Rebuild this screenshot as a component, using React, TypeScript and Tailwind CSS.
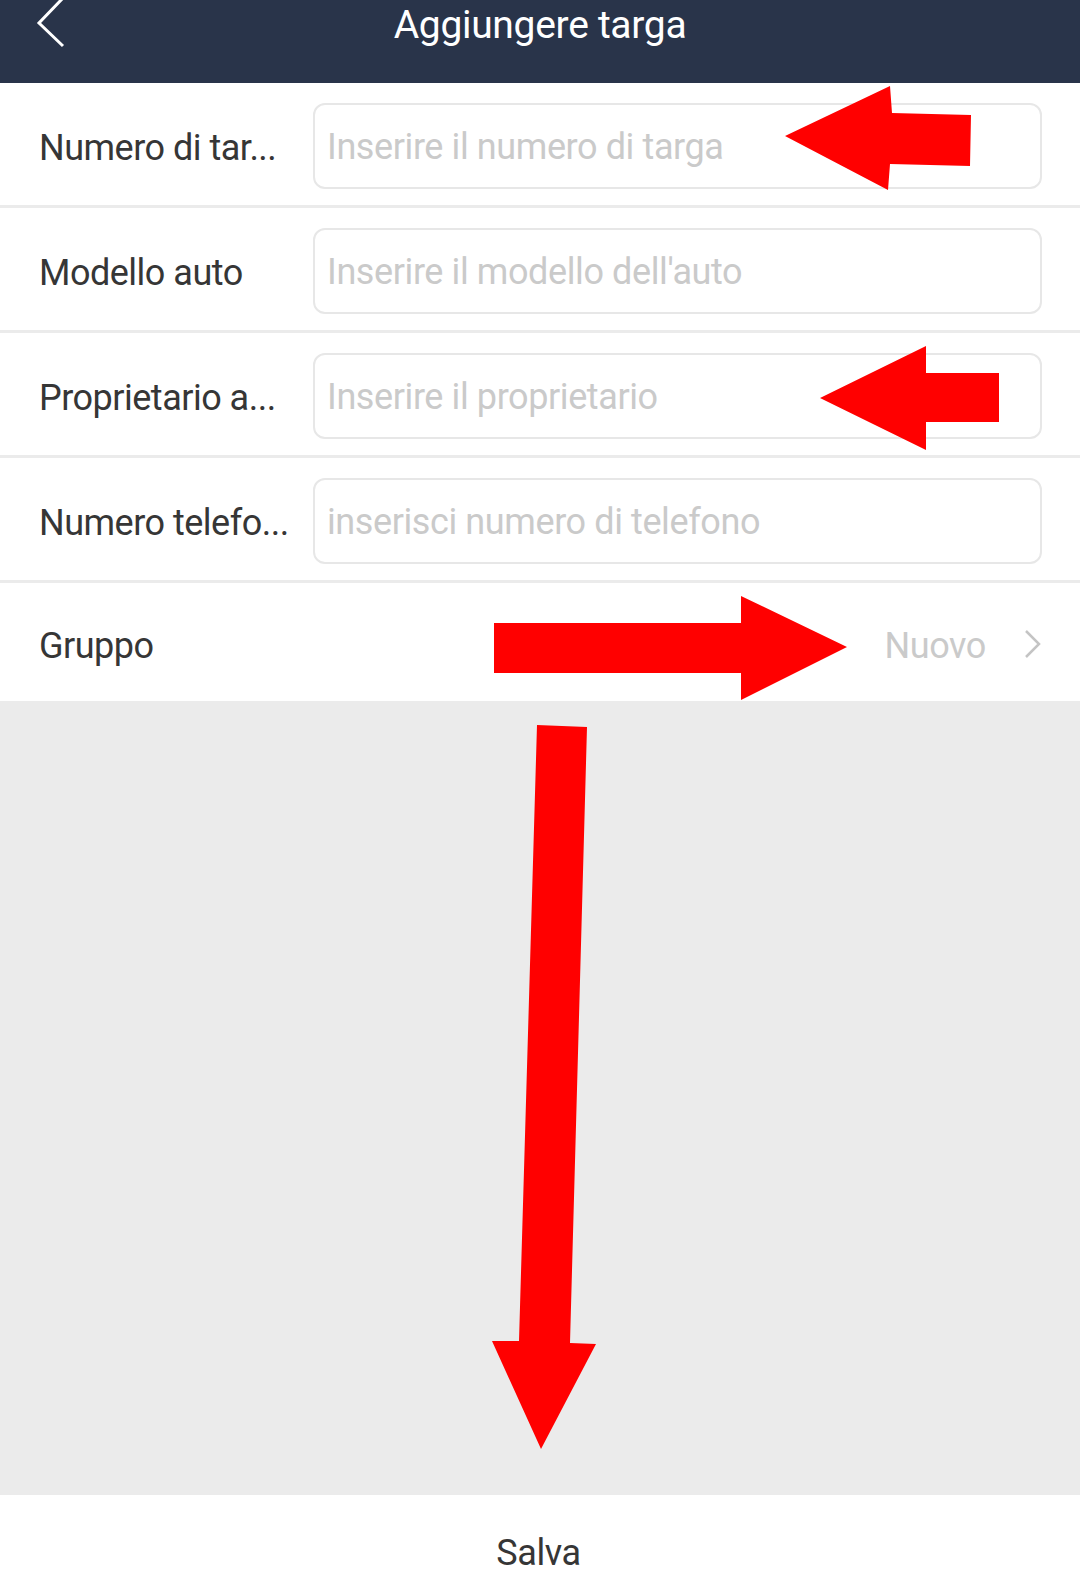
import React from 'react';

const FONT = { fontFamily: 'Roboto, "Noto Sans", "Liberation Sans", sans-serif' };

interface Field {
  label: string;
  placeholder: string;
}

const FIELDS: Field[] = [
  { label: 'Numero di tar...', placeholder: 'Inserire il numero di targa' },
  { label: 'Modello auto', placeholder: "Inserire il modello dell'auto" },
  { label: 'Proprietario a...', placeholder: 'Inserire il proprietario' },
  { label: 'Numero telefo...', placeholder: 'inserisci numero di telefono' },
];

function FieldRow({ field }: { field: Field }) {
  return (
    <div className="flex h-[125px] items-center border-b-[3px] border-[#ebebeb] bg-white pl-[39px] pr-[38px] pt-[3px]">
      <div className="w-[274px] shrink-0 pt-[4px] text-[36px] leading-none tracking-[-0.5px] text-[#363636]">
        {field.label}
      </div>
      <div className="flex h-[86px] flex-1 items-center rounded-[12px] border-2 border-[#e7e7e7] px-[12px]">
        <span className="pt-[3px] text-[36px] leading-none tracking-[-0.4px] text-[#cacaca]">{field.placeholder}</span>
      </div>
    </div>
  );
}

// frecce rosse sopra lo screenshot
function Arrows() {
  return (
    <svg className="pointer-events-none absolute left-0 top-0" width="1080" height="1572" viewBox="0 0 1080 1572">
      <polygon
        fill="#ff0000"
        points="785,136 890,86 892,113 971,115 970,166 890,164 888,190"
      />
      <polygon
        fill="#ff0000"
        points="820,398 926,346 926,373 999,373 999,422 926,422 926,450"
      />
      <polygon
        fill="#ff0000"
        points="494,623 741,623 741,596 847,647 741,700 741,673 494,673"
      />
      <polygon
        fill="#ff0000"
        points="537,725 587,727 570,1343 596,1344 541,1449 492,1341 519,1341"
      />
    </svg>
  );
}

export default function App() {
  return (
    <div className="relative flex h-[1572px] w-[1080px] flex-col overflow-hidden bg-[#ebebeb]" style={FONT}>
      {/* Header */}
      <div className="relative flex h-[83px] shrink-0 items-start justify-center bg-[#29344a]">
        <svg className="absolute left-[36px] top-[-4px]" width="30" height="52" viewBox="0 0 30 52">
          <polyline points="27,2 3,27 27,50" fill="none" stroke="#ffffff" strokeWidth="3" />
        </svg>
        <h1 className="mt-[5px] text-[39px] font-normal leading-[40px] tracking-[-0.3px] text-white">
          Aggiungere targa
        </h1>
      </div>

      {/* Form */}
      {FIELDS.map((f) => (
        <FieldRow key={f.label} field={f} />
      ))}
      <div className="flex h-[118px] shrink-0 items-center bg-white pl-[39px] pr-[38px] pt-[8px]">
        <span className="text-[36px] leading-none tracking-[-0.5px] text-[#363636]">Gruppo</span>
        <span className="ml-auto text-[36px] leading-none tracking-[-0.4px] text-[#cacaca]">Nuovo</span>
        <svg className="mb-[4px] ml-[38px]" width="18" height="30" viewBox="0 0 18 30">
          <polyline points="2,2 15,15 2,28" fill="none" stroke="#c4c4c4" strokeWidth="2.5" />
        </svg>
      </div>

      <div className="flex-1" />

      {/* Bottom button */}
      <div className="flex h-[77px] shrink-0 justify-center bg-white pr-[3px]">
        <span className="mt-[40px] text-[36px] leading-none tracking-[-0.4px] text-[#363636]">Salva</span>
      </div>

      <Arrows />
    </div>
  );
}
